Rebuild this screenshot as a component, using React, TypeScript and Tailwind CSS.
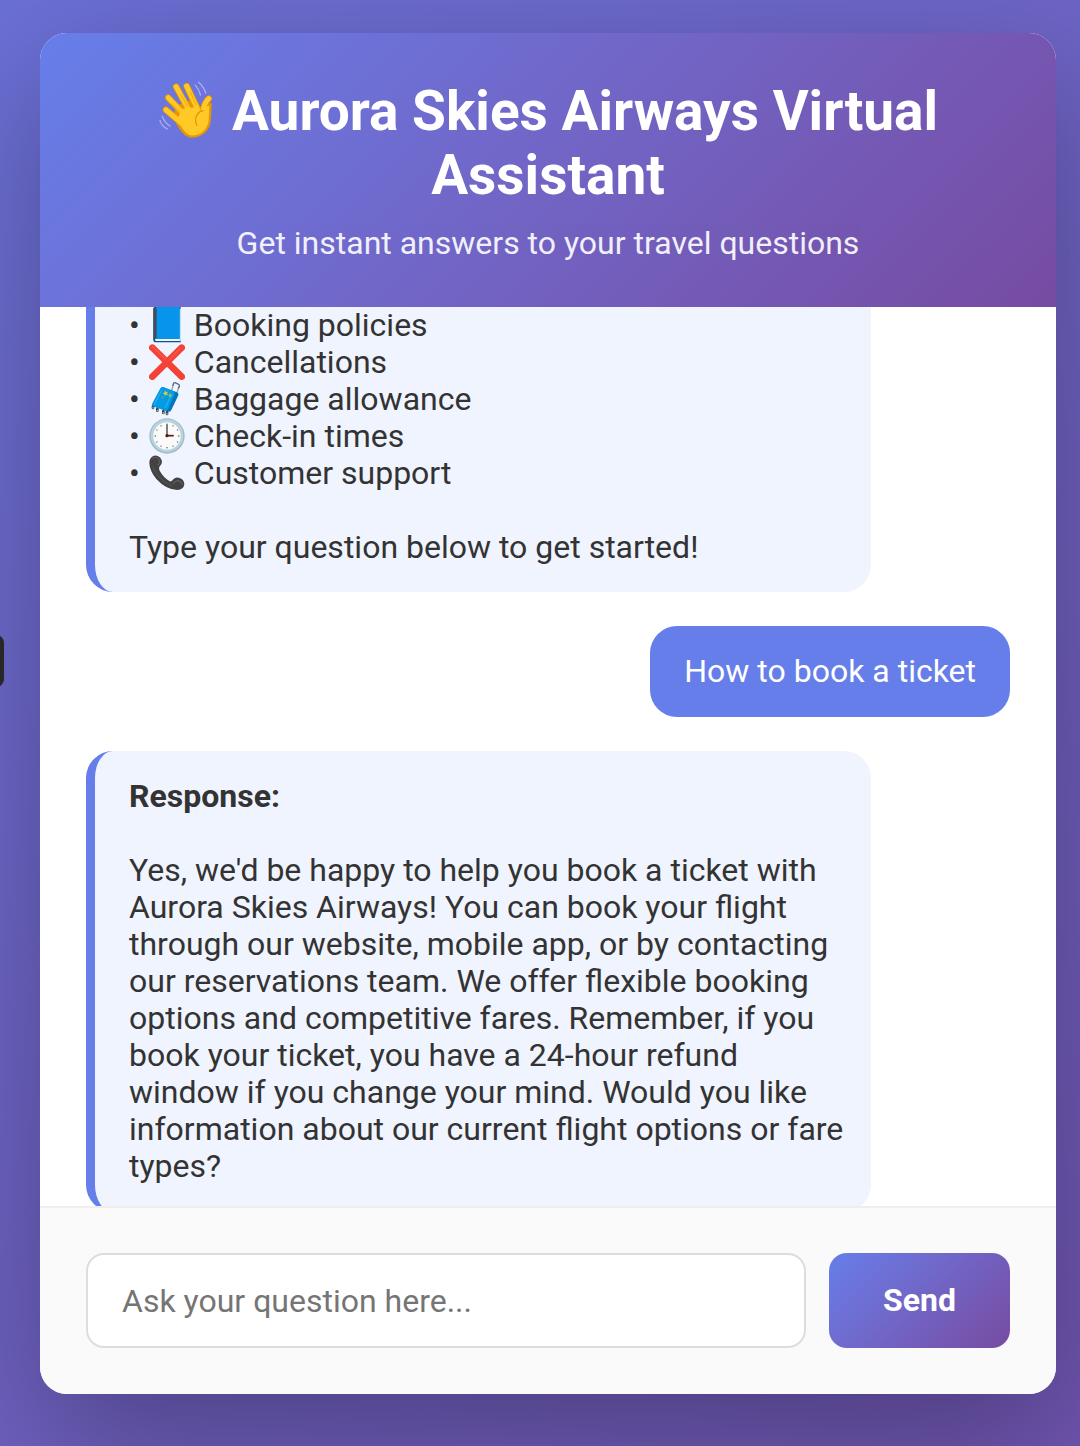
import React from "react";

const iconClass = "inline-block size-9 align-top";

function WaveIcon() {
  return (
    <svg viewBox="66 68 170 178" role="img" aria-label="Waving hand" className="-mt-2 mr-[18px] mb-1 inline-block h-[59px] w-14 align-middle">
      <g fill="none" strokeLinecap="round" strokeLinejoin="round">
        <g stroke="#e59600" strokeWidth="20">
          <path d="M90 158 137 198M97 121 150 177M121 88 165 168M153 86 188 160" />
          <path d="M220 124Q209 134 204 155L208 190" />
        </g>
        <path d="M112 174C125 205 144 240 169 240C202 240 224 215 224 185L227 140 203 138 198 158 178 125 130 145Z" fill="#e59600" stroke="#e59600" strokeWidth="5" />
        <g stroke="#ffca28" strokeWidth="15">
          <path d="M90 158 137 198M97 121 150 177M121 88 165 168M153 86 188 160" />
          <path d="M220 124Q209 134 204 155L208 190" />
        </g>
        <path d="M125 185C136 210 150 236 170 236C199 236 220 213 220 185L222 145 204 150 197 163 180 150 140 155Z" fill="#ffca28" />
        <path d="M107 140 133 165M135 111 156 148M165 105 181 143" stroke="#e59600" strokeWidth="3" opacity=".65" />
        <path d="M203 160Q182 165 180 188Q180 199 184 205" stroke="#e59600" strokeWidth="4" />
        <path d="M179 83Q190 94 195 113M189 74Q205 87 211 107M79 178Q86 197 103 207M72 190Q76 207 94 216" stroke="#b5b9ee" strokeWidth="4" opacity=".85" />
      </g>
    </svg>
  );
}

function BookIcon() {
  return (
    <svg viewBox="205 20 108 108" className={iconClass} aria-hidden="true">
      <path d="M221 20H300V126H224Q218 126 218 118V26Z" fill="#01579b" />
      <path d="M224 115H299V122H226Q221 120 224 115Z" fill="#f5f5f5" />
      <path d="M296 25H301V121H296Z" fill="#b3e5fc" />
      <path d="M226 20H297V115H226Z" fill="#0794ec" />
      <path d="M218 22H228V114Q220 114 220 121L218 118Z" fill="#424f59" />
    </svg>
  );
}

function CrossIcon() {
  return (
    <svg viewBox="205 132 108 108" className={iconClass} aria-hidden="true">
      <path d="M215 143 303 230M303 143 215 230" stroke="#f44336" strokeWidth="20" strokeLinecap="round" />
      <path d="M215 139 254 178M265 181 298 145" stroke="#ff7061" strokeWidth="4" strokeLinecap="round" opacity=".5" />
    </svg>
  );
}

function LuggageIcon() {
  return (
    <svg viewBox="12 8 108 108" className={iconClass} aria-hidden="true">
      <path d="m80 36 6-21M96 43l6-20" stroke="#90a4ae" strokeWidth="4" />
      <path d="m84 21 2-7q1-2 4-1l11 5q3 1 2 5l-2 6" fill="none" stroke="#546e7a" strokeWidth="4" strokeLinecap="round" />
      <path d="M24 84v5M37 91v6M55 98v6M66 101v6" stroke="#37474f" strokeWidth="8" strokeLinecap="round" />
      <path d="M24 88v1M37 96v1M55 103v1M66 106v1" stroke="#b0bec5" strokeWidth="4" strokeLinecap="round" />
      <path d="M56 27 96 42q6 3 4 9L79 95q-3 7-9 5L25 84q-5-2-3-8L46 31q3-7 10-4Z" fill="#0277bd" />
      <path d="M55 27 86 39q5 3 3 8L68 93q-3 5-8 3L25 84q-5-2-3-8L46 31q3-6 9-4Z" fill="#039be5" />
      <path d="M50 36 28 79M80 48 60 89" stroke="#29b6f6" strokeWidth="3" />
      <path d="m60 36 3 5 6-1-3 5 3 5-6-1-4 4-1-6-5-2 6-3Z" fill="#d4cf3a" />
      <path d="m75 44 2 4 5 0-3 4 1 4-4-1-4 2 0-5-3-3 5-1Z" fill="#8bc34a" />
      <path d="m51 54 5 2-3 5-5-2Z" fill="#a1887f" />
    </svg>
  );
}

function ClockIcon() {
  return (
    <svg viewBox="205 355 108 108" className={iconClass} aria-hidden="true">
      <circle cx="259" cy="409" r="53" fill="#9fbdc7" />
      <circle cx="259" cy="408" r="49" fill="#b9d4de" />
      <circle cx="259" cy="409" r="41" fill="#fafafa" />
      <g stroke="#424242" strokeWidth="3" strokeLinecap="round">
        <path d="M259 373v2M259 443v2M223 409h2M293 409h2M241 378v1M277 378v1M228 391h1M290 391h1M228 427h1M290 427h1M241 439v1M277 439v1" />
      </g>
      <path d="M259 375V406" stroke="#424242" strokeWidth="4" />
      <path d="M259 408H279" stroke="#5d1717" strokeWidth="5" />
      <circle cx="259" cy="408" r="5" fill="#5d1717" />
    </svg>
  );
}

function PhoneIcon() {
  return (
    <svg viewBox="205 466 108 108" className={iconClass} aria-hidden="true">
      <path d="M211 474Q220 465 231 469Q240 472 243 482Q246 492 238 499Q233 504 237 513Q248 533 266 544Q272 548 278 539Q285 531 297 535Q311 540 311 554Q309 570 290 571Q256 570 227 538Q207 514 206 490Q206 479 211 474Z" fill="#424242" />
      <path d="M216 475Q230 469 236 482Q239 490 232 496M278 551Q285 541 296 544Q304 547 305 554" fill="none" stroke="#5c5c5c" strokeWidth="4" strokeLinecap="round" />
      <path d="M218 500Q222 520 239 535Q256 552 276 559" fill="none" stroke="#505050" strokeWidth="4" />
    </svg>
  );
}

const topics = [
  { label: "Booking policies", Icon: BookIcon },
  { label: "Cancellations", Icon: CrossIcon },
  { label: "Baggage allowance", Icon: LuggageIcon },
  { label: "Check-in times", Icon: ClockIcon },
  { label: "Customer support", Icon: PhoneIcon },
];

export default function App() {
  return (
    <div className="relative flex h-screen overflow-hidden bg-linear-135 from-[#6b70d6] to-[#6f55b0] pt-[33px] pr-6 pb-[52px] pl-10 font-['Roboto',sans-serif] text-[32px] leading-[37px] text-[#333]">
      <div className="absolute top-[635px] -left-4 h-[52px] w-5 rounded-lg bg-[#282828]" />
      <main className="flex min-w-0 flex-1 flex-col overflow-hidden rounded-[27px] bg-white shadow-[0_46px_137px_rgba(0,0,0,0.3)]">
        <header className="shrink-0 bg-linear-135 from-[#667eea] to-[#764ba2] px-[46px] pt-[46px] pb-[45px] text-center text-white">
          <h1 className="text-[55px] leading-[64px] font-bold">
            <WaveIcon />
            Aurora Skies Airways Virtual Assistant
          </h1>
          <p className="mt-[18px] opacity-90">Get instant answers to your travel questions</p>
        </header>
        <section aria-label="Conversation" className="flex min-h-0 flex-1 flex-col gap-[34px] overflow-hidden px-[46px]">
          <article className="w-[85%] shrink-0 rounded-b-[27px] border-l-[9px] border-[#667eea] bg-[#f0f4ff] pr-6 pb-[26px] pl-[34px]">
            <ul>
              {topics.map(({ label, Icon }) => (
                <li key={label} className="flex gap-[9px]">
                  <span>•</span>
                  <Icon />
                  <span>{label}</span>
                </li>
              ))}
            </ul>
            <p className="mt-[37px]">Type your question below to get started!</p>
          </article>
          <article className="shrink-0 self-end rounded-[27px] bg-[#667eea] px-[34px] py-[27px] text-white">
            How to book a ticket
          </article>
          <article className="w-[85%] shrink-0 rounded-[27px] border-l-[9px] border-[#667eea] bg-[#f0f4ff] py-[27px] pr-6 pl-[34px]">
            <strong className="block font-bold">Response:</strong>
            <p className="mt-[37px]">
              Yes, we'd be happy to help you book a ticket with Aurora Skies Airways! You can book your flight through our website, mobile app, or by contacting our reservations team. We offer flexible booking options and competitive fares. Remember, if you book your ticket, you have a 24-hour refund window if you change your mind. Would you like information about our current flight options or fare types?
            </p>
          </article>
        </section>
        <form onSubmit={(e) => e.preventDefault()} className="flex shrink-0 gap-[23px] border-t-2 border-[#eee] bg-[#fafafa] px-[46px] pt-[45px] pb-[46px]">
          <input
            type="text"
            aria-label="Your question"
            placeholder="Ask your question here..."
            className="h-[95px] min-w-0 flex-1 rounded-[18px] border-2 border-[#ddd] bg-white px-[34px] outline-none placeholder:text-[#757575]"
          />
          <button type="submit" className="rounded-[18px] bg-linear-135 from-[#667eea] to-[#764ba2] px-[54px] font-bold text-white">
            Send
          </button>
        </form>
      </main>
    </div>
  );
}
